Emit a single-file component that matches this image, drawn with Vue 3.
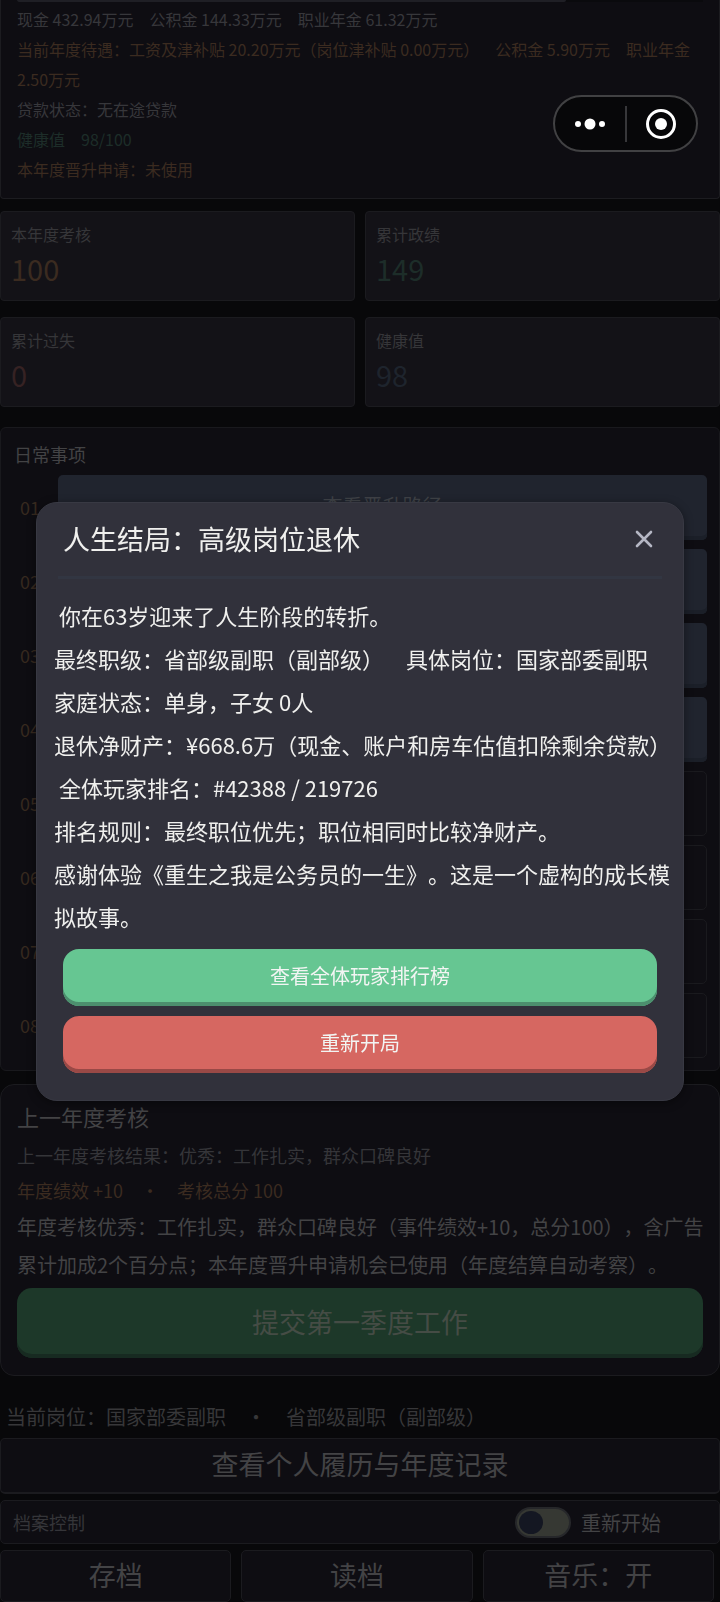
<template>
  <div class="game-page">
    <!-- 人物概况 -->
    <section class="profile-card">
      <div class="progress"><div class="progress-bar" :style="{ width: progress + '%' }"></div></div>
      <div class="profile-lines">
        <p v-for="line in profileLines" :key="line.text" :class="line.tone">{{ line.text }}</p>
      </div>
    </section>

    <!-- 数据卡片 -->
    <section class="stats">
      <div v-for="s in stats" :key="s.label" class="stat">
        <div class="stat-label">{{ s.label }}</div>
        <div class="stat-value" :class="s.tone">{{ s.value }}</div>
      </div>
    </section>

    <!-- 日常事项 -->
    <section class="daily">
      <h3>日常事项</h3>
      <ol class="daily-list">
        <li v-for="item in dailyItems" :key="item.no">
          <span class="daily-no">{{ item.no }}</span>
          <button
            type="button"
            class="daily-btn"
            :class="{ plain: item.plain }"
            :aria-label="item.name || '事项' + item.no"
          >{{ item.name }}</button>
        </li>
      </ol>
    </section>

    <!-- 年度考核 -->
    <section class="review">
      <h3>上一年度考核</h3>
      <p class="review-result">上一年度考核结果：优秀：工作扎实，群众口碑良好</p>
      <p class="review-score">年度绩效 +10　・　考核总分 100</p>
      <p class="review-text">年度考核优秀：工作扎实，群众口碑良好（事件绩效+10，总分100），含广告累计加成2个百分点；本年度晋升申请机会已使用（年度结算自动考察）。</p>
      <button type="button" class="submit-btn">提交第一季度工作</button>
    </section>

    <!-- 底部操作 -->
    <footer class="footer">
      <p class="post">当前岗位：国家部委副职　・　省部级副职（副部级）</p>
      <button type="button" class="line-btn resume-btn">查看个人履历与年度记录</button>
      <div class="archive">
        <span class="archive-title">档案控制</span>
        <label class="restart">
          <input v-model="restart" type="checkbox" class="switch" />
          <span>重新开始</span>
        </label>
      </div>
      <div class="archive-btns">
        <button type="button" class="line-btn">存档</button>
        <button type="button" class="line-btn">读档</button>
        <button type="button" class="line-btn" @click="music = !music">音乐：{{ music ? '开' : '关' }}</button>
      </div>
    </footer>

    <!-- 结局弹窗 -->
    <div v-if="visible" class="overlay">
      <section class="dialog" role="dialog" aria-modal="true" aria-labelledby="ending-title">
        <header class="dialog-header">
          <h2 id="ending-title">人生结局：高级岗位退休</h2>
          <button type="button" class="close-btn" aria-label="关闭" @click="visible = false">
            <svg width="18" height="18" viewBox="0 0 18 18">
              <path d="M2 2L16 16M16 2L2 16" fill="none" stroke="currentColor" stroke-width="2.6" stroke-linecap="round" />
            </svg>
          </button>
        </header>
        <div class="dialog-body">
          <p v-for="line in endingLines" :key="line">{{ line }}</p>
        </div>
        <div class="dialog-actions">
          <button type="button" class="action-btn green">查看全体玩家排行榜</button>
          <button type="button" class="action-btn red">重新开局</button>
        </div>
      </section>
    </div>

    <!-- 小程序胶囊 -->
    <div class="capsule">
      <button type="button" aria-label="更多">
        <svg width="32" height="32" viewBox="0 0 32 32" fill="#fff">
          <circle cx="4" cy="16" r="3" />
          <circle cx="16" cy="16" r="5.5" />
          <circle cx="28" cy="16" r="3" />
        </svg>
      </button>
      <i class="capsule-line"></i>
      <button type="button" aria-label="退出">
        <svg width="32" height="32" viewBox="0 0 32 32">
          <circle cx="16" cy="16" r="13.5" fill="none" stroke="#fff" stroke-width="3" />
          <circle cx="16" cy="16" r="6" fill="#fff" />
        </svg>
      </button>
    </div>
  </div>
</template>

<script setup>
import { ref } from 'vue'

const visible = ref(true)
const restart = ref(false)
const music = ref(true)
const progress = ref(80)

const profileLines = [
  { text: '现金 432.94万元　公积金 144.33万元　职业年金 61.32万元', tone: 'gray' },
  { text: '当前年度待遇：工资及津补贴 20.20万元（岗位津补贴 0.00万元）　公积金 5.90万元　职业年金 2.50万元', tone: 'orange' },
  { text: '贷款状态：无在途贷款', tone: 'gray' },
  { text: '健康值　98/100', tone: 'green' },
  { text: '本年度晋升申请：未使用', tone: 'orange' }
]

const stats = [
  { label: '本年度考核', value: 100, tone: 'orange' },
  { label: '累计政绩', value: 149, tone: 'green' },
  { label: '累计过失', value: 0, tone: 'red' },
  { label: '健康值', value: 98, tone: 'blue' }
]

const dailyItems = [
  { no: '01', name: '查看晋升路径' },
  { no: '02' },
  { no: '03' },
  { no: '04' },
  { no: '05', plain: true },
  { no: '06', plain: true },
  { no: '07', plain: true },
  { no: '08', plain: true }
]

const endingLines = [
  ' 你在63岁迎来了人生阶段的转折。',
  '最终职级：省部级副职（副部级）　具体岗位：国家部委副职',
  '家庭状态：单身，子女 0人',
  '退休净财产：¥668.6万（现金、账户和房车估值扣除剩余贷款）',
  ' 全体玩家排名：#42388 / 219726',
  '排名规则：最终职位优先；职位相同时比较净财产。',
  '感谢体验《重生之我是公务员的一生》。这是一个虚构的成长模拟故事。'
]
</script>

<style>
body {
  margin: 0;
  background: #08080a;
}
</style>

<style scoped>
.game-page {
  position: relative;
  color: #434345;
  font-family: "Noto Sans CJK SC", sans-serif;
  text-spacing-trim: space-all;
}

.game-page * {
  box-sizing: border-box;
}

p,
h2,
h3,
ol {
  margin: 0;
  padding: 0;
  font-weight: 400;
}

button {
  padding: 0;
  border: 0;
  background: transparent;
  color: inherit;
  font-family: inherit;
  cursor: pointer;
}

.gray { color: #37373b; }
.orange { color: #3b2b20; }
.green { color: #1d2d29; }
.red { color: #362223; }
.blue { color: #1e242d; }

/* ===== 人物概况 ===== */
.profile-card {
  padding: 0 16px 14px;
  border: 1px solid #1c1c20;
  border-top: 0;
  border-radius: 0 0 4px 4px;
  background: #0e0d12;
  font-size: 16px;
  line-height: 30px;
}

.progress {
  height: 2px;
  background: #0a0a0d;
}

.progress-bar {
  height: 100%;
  border-radius: 0 0 2px 2px;
  background: #1f1f25;
}

.profile-lines {
  padding-top: 2px;
}

/* ===== 数据卡片 ===== */
.stats {
  display: grid;
  grid-template-columns: 1fr 1fr;
  gap: 16px 10px;
  margin-top: 12px;
}

.stat {
  padding: 10px 10px 12px;
  border: 1px solid #1b1b1f;
  border-radius: 4px;
  background: #131217;
}

.stat-label {
  color: #363639;
  font-size: 16px;
  line-height: 24px;
}

.stat-value {
  margin-top: 2px;
  font-size: 29px;
  line-height: 40px;
}

/* ===== 日常事项 ===== */
.daily {
  margin-top: 20px;
  padding: 12px 12px 12px 19px;
  border: 1px solid #19191d;
  border-radius: 6px;
  background: #0e0d12;
}

.daily h3 {
  margin: 0 0 7px -6px;
  font-size: 18px;
  line-height: 28px;
}

.daily-list {
  display: flex;
  flex-direction: column;
  gap: 9px;
  list-style: none;
}

.daily-list li {
  display: flex;
  align-items: center;
}

.daily-no {
  flex: 0 0 38px;
  padding-bottom: 2px;
  color: #36291f;
  font-size: 18px;
}

.daily-btn {
  flex: 1;
  height: 65px;
  padding-bottom: 4px;
  border-radius: 5px;
  background: #20242e;
  box-shadow: inset 0 -4px #1b1f28;
  color: #3f4247;
  font-size: 20px;
}

.daily-btn.plain {
  border: 1px solid #1a1a1e;
  background: #0f0e13;
  box-shadow: none;
}

/* ===== 年度考核 ===== */
.review {
  margin-top: 13px;
  padding: 14px 16px 17px;
  border: 1px solid #1b1b1f;
  border-radius: 14px;
  background: #0e0d12;
}

.review h3 {
  margin-bottom: 5px;
  font-size: 22px;
  line-height: 34px;
}

.review-result,
.review-score {
  font-size: 18px;
  line-height: 35px;
}

.review-result {
  color: #353539;
}

.review-score {
  color: #3b2b20;
}

.review-text {
  margin-right: -4px;
  font-size: 20px;
  line-height: 38px;
}

.submit-btn {
  display: block;
  width: 100%;
  height: 70px;
  margin-top: 4px;
  padding-bottom: 4px;
  border-radius: 15px;
  background: #1d3829;
  box-shadow: inset 0 -4px #172a21;
  color: #454c45;
  font-size: 27px;
}

/* ===== 底部操作 ===== */
.footer {
  display: flex;
  flex-direction: column;
  gap: 6px;
  margin-top: 22px;
}

.post {
  margin-bottom: -4px;
  padding-left: 6px;
  color: #373739;
  font-size: 20px;
  line-height: 38px;
}

.line-btn {
  height: 52px;
  padding-bottom: 4px;
  border: 1px solid #1b1b1f;
  border-radius: 5px;
  background: #0e0d12;
  font-size: 27px;
}

.resume-btn {
  height: 56px;
  border-bottom-width: 2px;
}

.archive {
  display: flex;
  align-items: center;
  justify-content: space-between;
  height: 44px;
  padding: 0 58px 0 12px;
  border: 1px solid #1b1b1f;
  border-radius: 5px;
  background: #0e0d12;
}

.archive-title {
  color: #353539;
  font-size: 18px;
}

.restart {
  display: flex;
  align-items: center;
  gap: 10px;
  font-size: 20px;
}

.switch {
  appearance: none;
  width: 56px;
  height: 31px;
  margin: 0;
  padding: 2px;
  border: 2px solid #26272a;
  border-radius: 16px;
  background: #363833;
}

.switch::before {
  content: '';
  display: block;
  width: 24px;
  height: 23px;
  border-radius: 50%;
  background: #141722;
}

.switch:checked::before {
  margin-left: auto;
}

.archive-btns {
  display: grid;
  grid-template-columns: repeat(3, 1fr);
  gap: 10px;
  padding-right: 6px;
}

/* ===== 结局弹窗 ===== */
.overlay {
  position: fixed;
  inset: 0;
  display: flex;
  align-items: center;
  justify-content: center;
}

.dialog {
  width: 90%;
  padding-bottom: 27px;
  border: 1px solid #383943;
  border-radius: 21px;
  background: #31313b;
  box-shadow: 0 2px 10px rgba(0, 0, 0, 0.4);
  color: #f0f0ee;
}

.dialog-header {
  display: flex;
  align-items: center;
  justify-content: space-between;
  height: 76px;
  margin: 0 21px;
  padding: 0 9px 0 5px;
  border-bottom: 3px solid #323642;
}

.dialog-header h2 {
  font-size: 27px;
  line-height: 40px;
}

.close-btn {
  display: flex;
  color: #b5b7c4;
}

.dialog-body {
  padding: 15px 8px 0 17px;
  font-size: 22px;
  line-height: 43px;
  white-space: pre-wrap;
}

.dialog-actions {
  display: flex;
  flex-direction: column;
  gap: 10px;
  margin: 11px 26px 0;
}

.action-btn {
  height: 57px;
  padding-bottom: 4px;
  border-radius: 16px;
  color: #f2f5f3;
  font-size: 20px;
}

.action-btn.green {
  background: #66c692;
  box-shadow: inset 0 -4px #4c8f6e;
}

.action-btn.red {
  background: #d66761;
  box-shadow: inset 0 -4px #994946;
}

/* ===== 小程序胶囊 ===== */
.capsule {
  position: fixed;
  top: 95px;
  right: 22px;
  display: flex;
  align-items: center;
  width: 145px;
  height: 57px;
  border: 2px solid #414143;
  border-radius: 29px;
  background: #070709;
}

.capsule button {
  flex: 1;
  display: flex;
  justify-content: center;
}

.capsule-line {
  width: 2px;
  height: 36px;
  background: #37373a;
}
</style>
